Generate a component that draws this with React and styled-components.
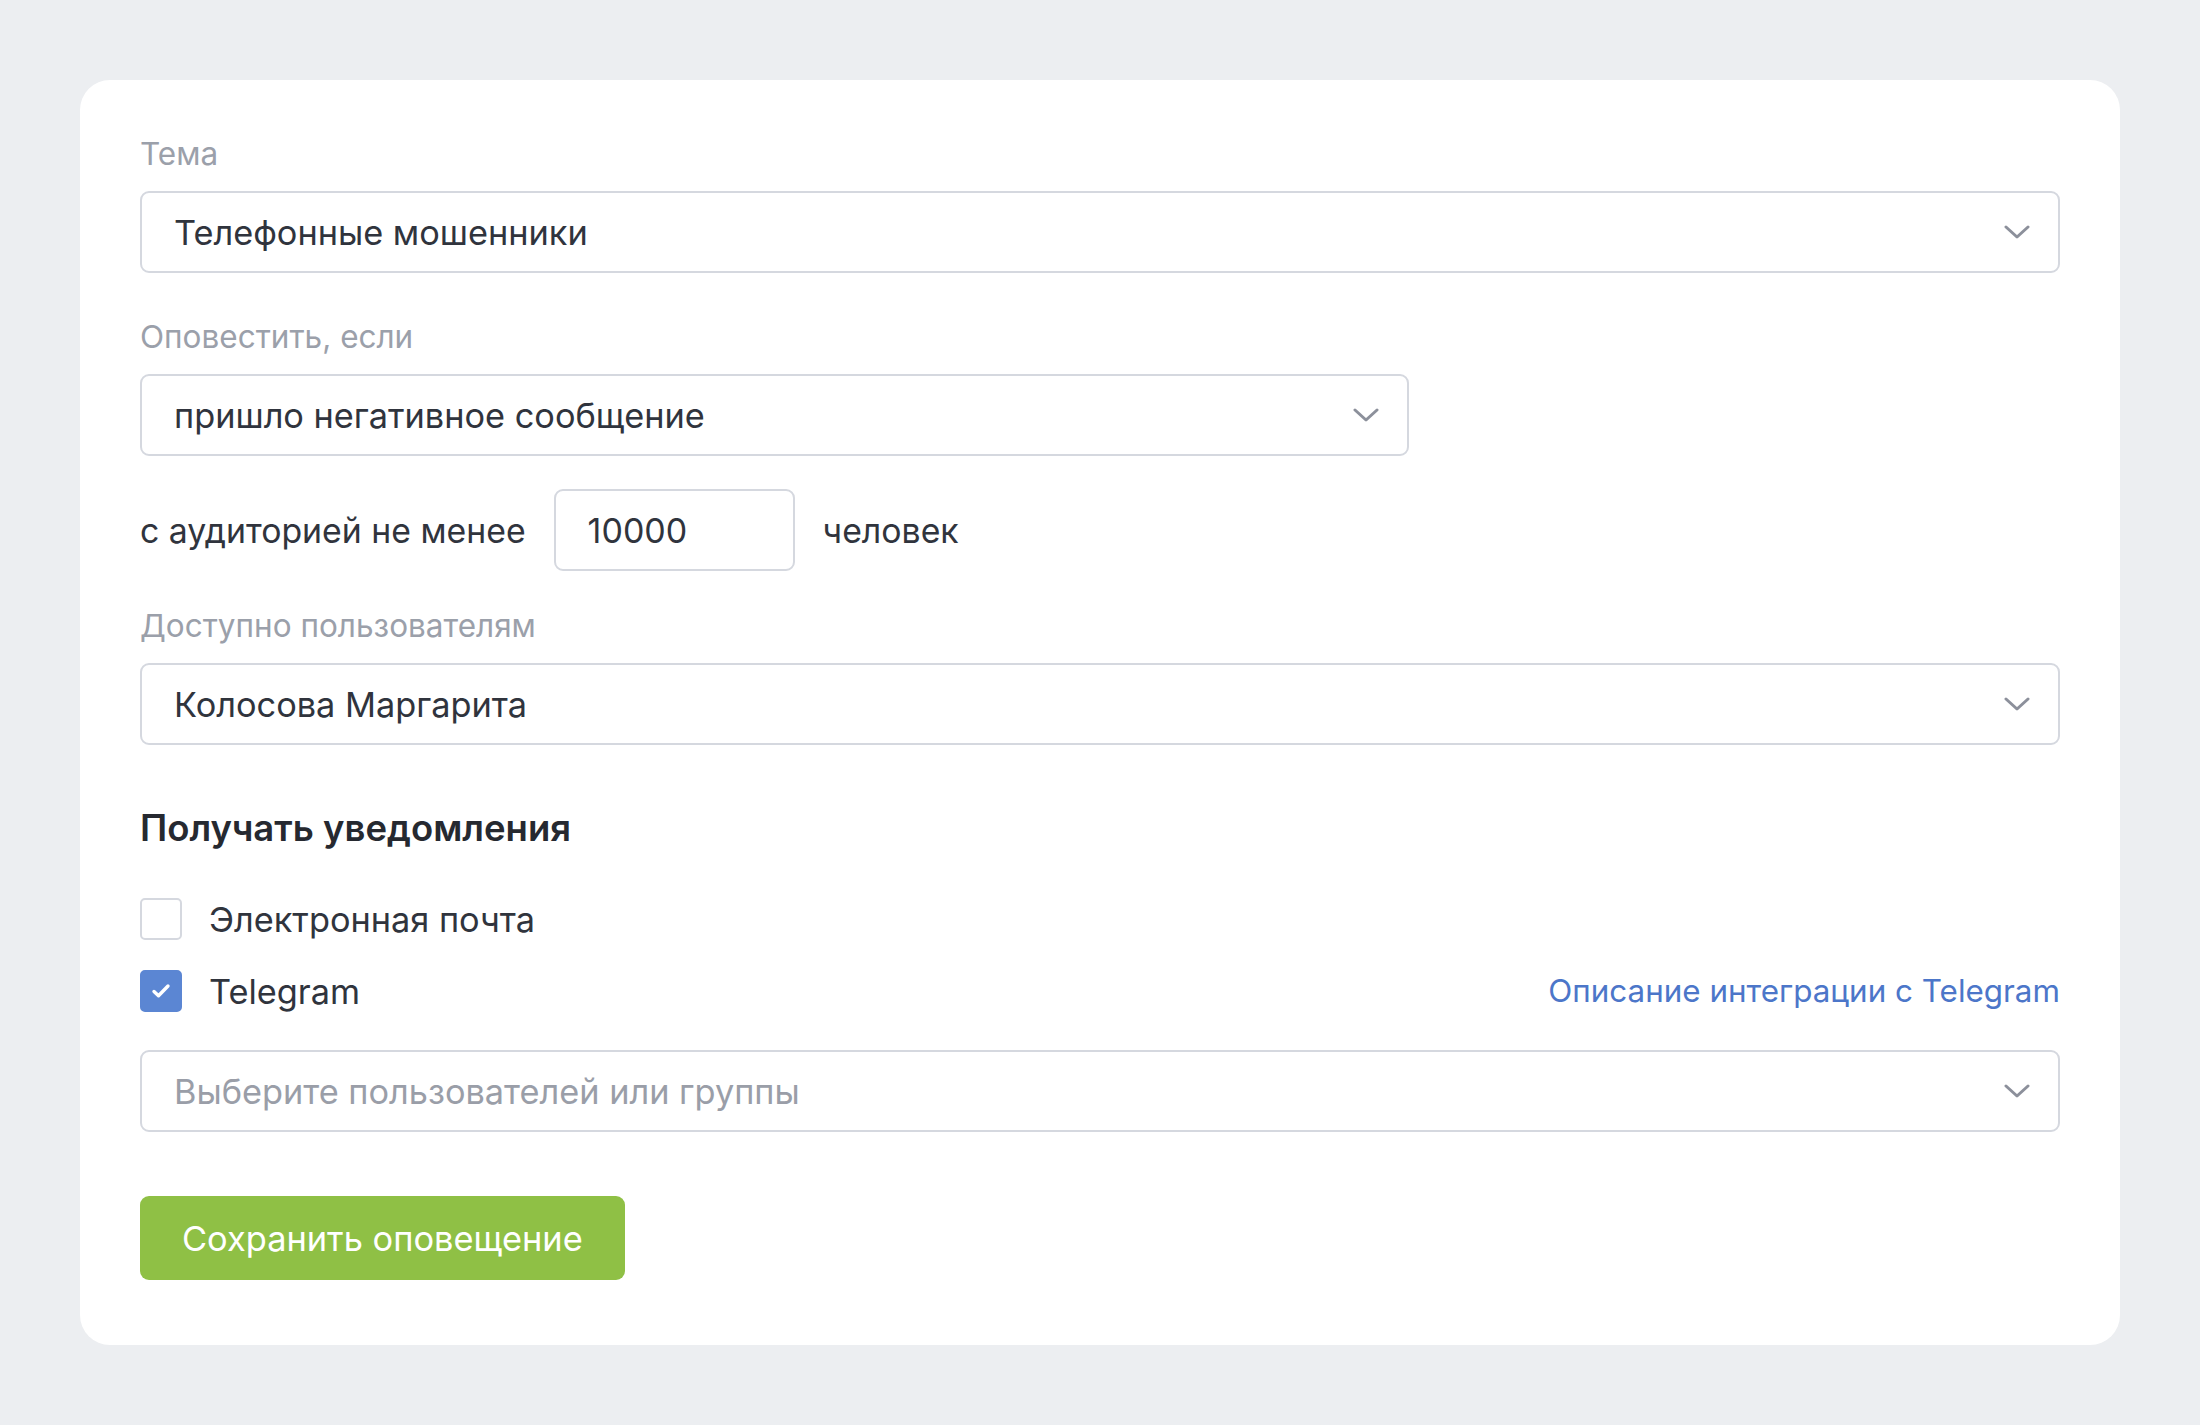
import React, { useState } from "react";
import styled, { createGlobalStyle } from "styled-components";

const colors = {
  page: "#eceef1",
  white: "#ffffff",
  border: "#d5d8df",
  label: "#9ba0aa",
  text: "#30343d",
  heading: "#262930",
  placeholder: "#9a9ea8",
  chevron: "#8c909b",
  link: "#4c76c9",
  check: "#5b86d3",
  green: "#8fc045",
};

const GlobalStyle = createGlobalStyle`
  html, body {
    margin: 0;
    padding: 0;
    background: ${colors.page};
    font-family: Inter, "Noto Sans", "Liberation Sans", sans-serif;
  }
  * {
    box-sizing: border-box;
  }
`;

const Page = styled.div`
  min-height: 1425px;
  padding: 80px 80px;
  background: ${colors.page};
`;

const Card = styled.form`
  background: ${colors.white};
  border-radius: 30px;
  padding: 56px 60px 65px;
  display: flex;
  flex-direction: column;
`;

const Label = styled.div`
  font-size: 31.5px;
  line-height: 36px;
  color: ${colors.label};
  margin-top: ${(p) => p.$mt || 0}px;
  margin-bottom: 19px;
`;

const SelectBox = styled.div`
  display: flex;
  align-items: center;
  justify-content: space-between;
  height: 82px;
  width: ${(p) => p.$width || "100%"};
  border: 2px solid ${colors.border};
  border-radius: 9px;
  padding: 0 28px 0 32px;
  font-size: 34.3px;
  color: ${(p) => (p.$placeholder ? colors.placeholder : colors.text)};
  margin-top: ${(p) => p.$mt || 0}px;
  cursor: pointer;
`;

const Chevron = () => (
  <svg width="26" height="14" viewBox="0 0 26 14" fill="none">
    <path
      d="M2 2l11 10L24 2"
      stroke={colors.chevron}
      strokeWidth="3"
      strokeLinecap="round"
      strokeLinejoin="round"
    />
  </svg>
);

const AudienceRow = styled.div`
  display: flex;
  align-items: center;
  gap: 28px;
  margin-top: 33px;
  font-size: 33.8px;
  color: ${colors.text};
`;

const NumberInput = styled.div`
  width: 241px;
  height: 82px;
  border: 2px solid ${colors.border};
  border-radius: 9px;
  display: flex;
  align-items: center;
  padding-left: 32px;
  font-size: 34px;
  color: ${colors.text};
`;

const Heading = styled.h3`
  margin: 63px 0 0;
  font-size: 36.5px;
  line-height: 41px;
  font-weight: 600;
  color: ${colors.heading};
`;

const CheckRow = styled.div`
  display: flex;
  align-items: center;
  justify-content: space-between;
  margin-top: ${(p) => p.$mt}px;
`;

const CheckLabel = styled.label`
  display: flex;
  align-items: center;
  gap: 27px;
  font-size: 34.3px;
  color: ${colors.text};
  cursor: pointer;
`;

const Box = styled.span`
  width: 42px;
  height: 42px;
  border-radius: 5px;
  display: flex;
  align-items: center;
  justify-content: center;
  border: 2px solid ${(p) => (p.$checked ? colors.check : colors.border)};
  background: ${(p) => (p.$checked ? colors.check : colors.white)};
`;

const Link = styled.a`
  font-size: 31.4px;
  color: ${colors.link};
  text-decoration: none;
`;

const SaveButton = styled.button`
  align-self: flex-start;
  margin-top: 64px;
  height: 84px;
  padding: 0 42px;
  border: 0;
  border-radius: 9px;
  background: ${colors.green};
  color: ${colors.white};
  font-family: inherit;
  font-size: 34.4px;
  cursor: pointer;
`;

const CheckMark = () => (
  <svg width="20" height="16" viewBox="0 0 20 16" fill="none">
    <path
      d="M3 8.5l4.5 4.3L17 3"
      stroke="#fff"
      strokeWidth="3.4"
      strokeLinecap="round"
      strokeLinejoin="round"
    />
  </svg>
);

const Checkbox = ({ checked, onToggle, children }) => (
  <CheckLabel onClick={onToggle}>
    <Box $checked={checked}>{checked && <CheckMark />}</Box>
    {children}
  </CheckLabel>
);

export default function App() {
  const [email, setEmail] = useState(false);
  const [telegram, setTelegram] = useState(true);

  return (
    <Page>
      <GlobalStyle />
      <Card onSubmit={(e) => e.preventDefault()}>
        <Label>Тема</Label>
        <SelectBox>
          Телефонные мошенники
          <Chevron />
        </SelectBox>

        <Label $mt={46}>Оповестить, если</Label>
        <SelectBox $width="1269px">
          пришло негативное сообщение
          <Chevron />
        </SelectBox>

        <AudienceRow>
          с аудиторией не менее
          <NumberInput>10000</NumberInput>
          человек
        </AudienceRow>

        <Label $mt={37}>Доступно пользователям</Label>
        <SelectBox>
          Колосова Маргарита
          <Chevron />
        </SelectBox>

        <Heading>Получать уведомления</Heading>

        <CheckRow $mt={49}>
          <Checkbox checked={email} onToggle={() => setEmail(!email)}>
            Электронная почта
          </Checkbox>
        </CheckRow>
        <CheckRow $mt={30}>
          <Checkbox checked={telegram} onToggle={() => setTelegram(!telegram)}>
            Telegram
          </Checkbox>
          <Link href="#">Описание интеграции с Telegram</Link>
        </CheckRow>

        <SelectBox $mt={38} $placeholder>
          Выберите пользователей или группы
          <Chevron />
        </SelectBox>

        <SaveButton type="submit">Сохранить оповещение</SaveButton>
      </Card>
    </Page>
  );
}
